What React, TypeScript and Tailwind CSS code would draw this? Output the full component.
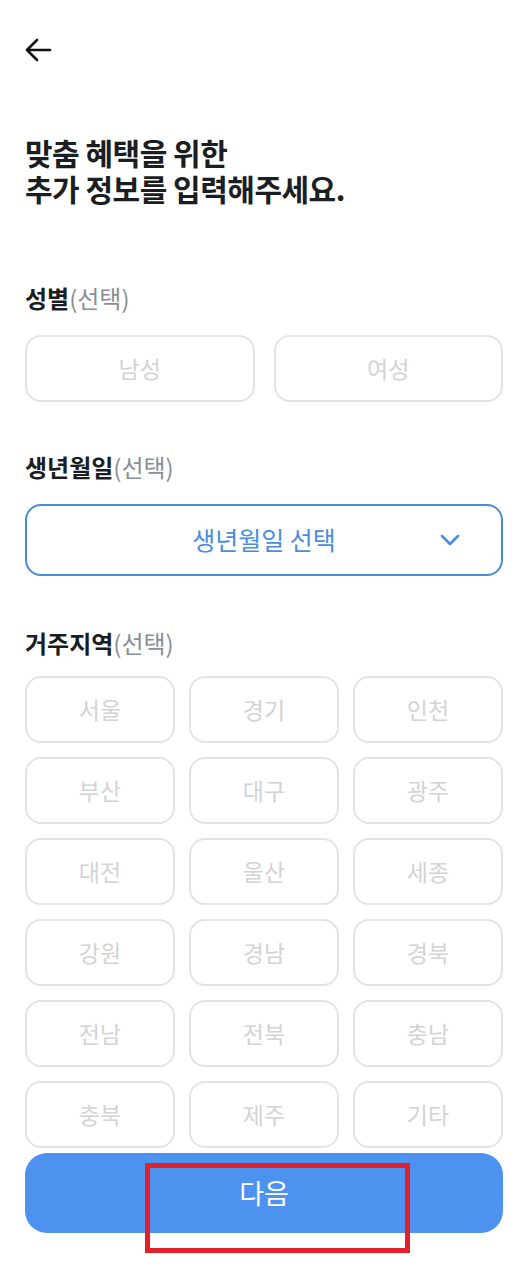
import React from "react";

const regions = [
  "서울", "경기", "인천",
  "부산", "대구", "광주",
  "대전", "울산", "세종",
  "강원", "경남", "경북",
  "전남", "전북", "충남",
  "충북", "제주", "기타",
];

function Label({ title }: { title: string }) {
  return (
    <div className="h-[30px] leading-[30px] text-[24px]">
      <span className="font-bold text-[#1a1d21]">{title}</span>
      <span className="text-[#8b8e93]">(선택)</span>
    </div>
  );
}

export default function App() {
  return (
    <div
      className="relative w-[515px] h-[1283px] bg-white pl-[25px] pr-[12px] overflow-hidden"
      style={{ fontFamily: '"Noto Sans CJK KR", "Noto Sans", sans-serif' }}
    >
      <div className="pt-[38px] h-[62px]">
        <svg width="28" height="24" viewBox="0 0 28 24" fill="none" className="-ml-[1px]">
          <path d="M26 12H3M13 2L3 12L13 22" stroke="#111" strokeWidth="2.6" strokeLinecap="round" strokeLinejoin="round" />
        </svg>
      </div>

      <h1 className="mt-[72px] text-[30px] leading-[36px] font-bold text-[#1a1d21] tracking-[-0.5px]">
        <div>맞춤 혜택을 위한</div>
        <div>추가 정보를 입력해주세요.</div>
      </h1>

      <div className="mt-[77px]">
        <Label title="성별" />
      </div>
      <div className="mt-[22px] grid grid-cols-2 gap-[19px]">
        {["남성", "여성"].map((g) => (
          <div
            key={g}
            className="h-[67px] rounded-[16px] border-2 border-[#e4e4e4] flex items-center justify-center text-[23px] text-[#d3d3d3]"
          >
            {g}
          </div>
        ))}
      </div>

      <div className="mt-[50px]">
        <Label title="생년월일" />
      </div>
      <div className="mt-[22px] relative h-[72px] rounded-[16px] border-2 border-[#4a8cd8] flex items-center justify-center text-[25px] text-[#4a8edb]">
        생년월일 선택
        <svg
          width="22"
          height="14"
          viewBox="0 0 22 14"
          fill="none"
          className="absolute right-[40px] top-1/2 -translate-y-1/2"
        >
          <path d="M3 3L11 11L19 3" stroke="#4a8edb" strokeWidth="2.6" strokeLinecap="round" strokeLinejoin="round" />
        </svg>
      </div>

      <div className="mt-[52px]">
        <Label title="거주지역" />
      </div>
      <div className="mt-[18px] grid grid-cols-3 gap-x-[14px] gap-y-[14px]">
        {regions.map((r) => (
          <div
            key={r}
            className="h-[67px] rounded-[16px] border-2 border-[#e4e4e4] flex items-center justify-center text-[23px] text-[#d3d3d3]"
          >
            {r}
          </div>
        ))}
      </div>

      <div className="mt-[5px] h-[80px] rounded-[22px] bg-[#4e92ef] flex items-center justify-center text-[27px] text-white">
        다음
      </div>

      <div className="absolute left-[145px] top-[1163px] w-[265px] h-[90px] border-[5px] border-[#e3202a] pointer-events-none" />
    </div>
  );
}
